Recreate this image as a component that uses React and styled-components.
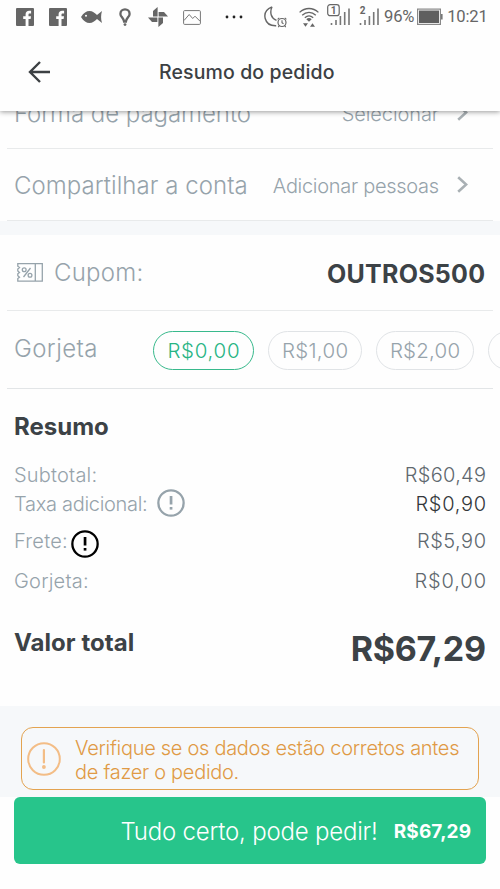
import React, { useState } from "react";
import styled, { createGlobalStyle, css } from "styled-components";

const GlobalStyle = createGlobalStyle`
  * {
    box-sizing: border-box;
  }
  body {
    margin: 0;
    background: #fefefe;
    font-family: "Inter", "Open Sans", sans-serif;
    overflow: hidden;
  }
`;

const Screen = styled.div`
  display: flex;
  flex-direction: column;
  width: 500px;
  height: 889px;
  overflow: hidden;
  background: #fefefe;
`;

const Text = styled.span`
  padding-top: ${({ $drop }) => $drop || 0}px;
  font-size: ${({ $size }) => $size || 20}px;
  font-weight: ${({ $weight }) => $weight || 300};
  letter-spacing: ${({ $spacing }) => $spacing || 0}px;
  margin-right: ${({ $spacing }) => -($spacing || 0)}px;
  color: ${({ $color }) => $color || "#96a3ab"};
  line-height: 1.2;
  white-space: nowrap;
`;

const StatusBar = styled.div`
  display: flex;
  align-items: center;
  height: 34px;
  padding-left: 16px;
  color: #666;
  svg {
    flex: none;
    display: block;
  }
`;

const StatusItem = styled.div`
  margin-left: ${({ $gap }) => $gap || 0}px;
  font-family: "Roboto", sans-serif;
  font-size: 16.6px;
  letter-spacing: -0.2px;
  line-height: 20px;
`;

const Header = styled.header`
  flex: none;
  position: relative;
  z-index: 1;
  height: 111px;
  background: #fefefe;
  box-shadow: 0 1px 5px rgba(0, 0, 0, 0.4);
`;

const TitleBar = styled.div`
  display: grid;
  grid-template-columns: 131px 1fr;
  align-items: center;
  height: 76px;
  padding-left: 28px;
`;

const Content = styled.main`
  flex: none;
  height: 595px;
  overflow: hidden;
`;

const Row = styled.div`
  display: flex;
  align-items: center;
  justify-content: space-between;
  height: ${({ $height }) => $height || 72}px;
  margin: 0 7px;
  padding: 0 8px 0 7px;
  border-bottom: 1px solid #e8eaeb;
`;

const LinkRow = styled(Row)`
  margin-top: ${({ $scrolled }) => ($scrolled ? -34 : 0)}px;
  padding-right: 25px;
`;

const LinkValue = styled.div`
  display: flex;
  align-items: center;
  gap: 18px;
`;

const Divider = styled.div`
  height: 14px;
  background: #f6f8fa;
`;

const Coupon = styled.div`
  display: flex;
  align-items: center;
  gap: 11px;
  padding-left: 3px;
`;

const TipRow = styled(Row)`
  justify-content: flex-start;
  margin-right: 0;
  padding-right: 0;
  border-bottom: 0;
  height: 77px;
  overflow: hidden;
`;

const TipLine = styled.div`
  height: 1px;
  margin: 0 7px;
  background: #e2e5e7;
`;

const TipLabel = styled.div`
  flex: 0 0 139px;
`;

const TipList = styled.div`
  display: flex;
  gap: 14px;
  padding-top: 1px;
`;

const TipPill = styled.button`
  flex: none;
  display: flex;
  align-items: center;
  justify-content: center;
  width: ${({ $width }) => $width}px;
  height: 39px;
  padding: 2px 0 0;
  border: 1.4px solid #e0e3e6;
  border-radius: 20px;
  background: transparent;
  font-family: inherit;
  ${({ $active }) =>
    $active &&
    css`
      border-color: #38b98c;
    `}
`;

const Summary = styled.section`
  padding: 22px 14px 0;
`;

const SummaryTitle = styled.h2`
  display: flex;
  margin: 0 0 20px;
  height: 32px;
  align-items: center;
`;

const SummaryLine = styled.div`
  display: flex;
  align-items: center;
  justify-content: space-between;
  height: ${({ $height }) => $height}px;
`;

const SummaryLabel = styled.div`
  display: flex;
  align-items: center;
  gap: ${({ $gap }) => $gap || 0}px;
  svg {
    display: block;
    margin-top: ${({ $drop }) => $drop || 0}px;
  }
`;

const TotalLine = styled(SummaryLine)`
  height: 50px;
  margin-top: 28px;
  align-items: flex-start;
`;

const WarningArea = styled.div`
  flex: none;
  height: 91px;
  padding: 21px 21px 0 21px;
  background: #f6f8fa;
`;

const Warning = styled.div`
  display: flex;
  align-items: center;
  gap: 14px;
  height: 63px;
  padding: 3px 0 0 5px;
  border: 1.5px solid #e3a350;
  border-radius: 12px;
  svg {
    flex: none;
    margin-top: -3px;
  }
`;

const WarningText = styled.div`
  display: flex;
  flex-direction: column;
`;

const OrderButton = styled.button`
  flex: none;
  display: flex;
  align-items: center;
  justify-content: flex-end;
  gap: 16px;
  height: 67px;
  margin: 0 14px;
  padding: 3px 15px 0 0;
  border: 0;
  border-radius: 6px;
  background: #27c58b;
  font-family: inherit;
`;

const FacebookIcon = () => (
  <svg width="18" height="18" viewBox="0 0 18 18">
    <rect width="18" height="18" rx="1" fill="#666" />
    <path
      d="M9.600 18v-7H7.200V8.200h2.400V6.300c0-2.400 1.400-3.600 3.600-3.600h1.900v2.700h-1.400c-.9 0-1.200.5-1.200 1.300v1.500H15l-.4 2.800h-2.100v7z"
      fill="#fefefe"
    />
  </svg>
);

const FishIcon = () => (
  <svg width="22" height="14" viewBox="0 0 22 14">
    <path
      d="M0 7C2.500 2.800 5.500 1 8.500 1c3 0 5.300 1.900 7.500 4l5-4c-1.200 4-1.200 8 0 12l-5-4c-2.200 2.200-4.500 4-7.500 4C5.500 13 2.500 11.200 0 7z"
      fill="#666"
    />
    <circle cx="5" cy="5.800" r="1" fill="#fefefe" />
  </svg>
);

const PinIcon = () => (
  <svg width="12" height="18" viewBox="0 0 12 18">
    <path
      d="M6 1.300a4.600 4.600 0 0 0-4.600 4.600c0 2.700 3.200 4 3.700 7.600h1.800c.5-3.600 3.700-4.900 3.700-7.600A4.600 4.600 0 0 0 6 1.300z"
      fill="none"
      stroke="#666"
      strokeWidth="2.300"
    />
    <circle cx="6" cy="16.600" r="1.400" fill="#666" />
  </svg>
);

const PinwheelIcon = () => (
  <svg width="20" height="20" viewBox="0 0 20 20" fill="#666">
    <path d="M9.600 9.400V0L5 4v5.400z" />
    <path d="M10.600 9.600H20l-4-4.600h-5.400z" />
    <path d="M10.400 10.600V20l4.600-4v-5.400z" />
    <path d="M9.400 10.400H0l4 4.600h5.400z" />
  </svg>
);

const PictureIcon = () => (
  <svg width="18" height="15" viewBox="0 0 18 15" fill="none" stroke="#777">
    <rect x=".6" y=".6" width="16.800" height="13.800" rx="1" />
    <path d="M1 10.500l5.200-6 3.500 4 2.300-2.300 5 5" />
  </svg>
);

const DotsIcon = () => (
  <svg width="18" height="4" viewBox="0 0 18 4" fill="#222">
    <circle cx="2" cy="2" r="1.400" />
    <circle cx="9" cy="2" r="1.400" />
    <circle cx="16" cy="2" r="1.400" />
  </svg>
);

const MoonIcon = () => (
  <svg width="24" height="22" viewBox="0 0 24 22" fill="none" stroke="#666" strokeWidth="1.400">
    <path d="M8 .8C2.500 3 0 7.500 1.200 12.500c1.200 4.700 5.300 7.500 11 7.300M8 .8C5.500 6.500 7 12.300 12.500 14.300" />
    <circle cx="18" cy="16.500" r="4" strokeWidth="1.200" />
    <path
      d="M18 14.300v2.400l1.500 1M13.600 13.400l1.700-1.500M22.400 13.400l-1.700-1.500M15.300 19.600l-1 1.500M20.700 19.600l1 1.500"
      strokeWidth="1.100"
    />
  </svg>
);

const WifiIcon = () => (
  <svg width="20" height="20" viewBox="0 0 20 20" fill="none" stroke="#666" strokeWidth="1.300">
    <path d="M.6 5.400c5.500-5.200 13.300-5.200 18.800 0M3.200 8.200c4-3.800 9.600-3.800 13.600 0M5.800 10.800c2.500-2.300 5.900-2.300 8.400 0" />
    <path d="M7.300 12.200c1.600-1.500 3.800-1.500 5.400 0L10 14.800z" fill="#666" stroke="none" />
    <path d="M4 16.200h5l-2.500 3.600zM11 19.800h5l-2.500-3.600z" fill="#666" stroke="none" />
  </svg>
);

const SignalIcon = ({ sim, boxed }) => (
  <svg width="23" height="26" viewBox="0 0 23 26">
    {boxed && (
      <rect x=".7" y=".7" width="11.500" height="11" rx="2.500" fill="none" stroke="#666" strokeWidth="1.200" />
    )}
    <text x="6.400" y="9.800" textAnchor="middle" fontFamily="Roboto" fontWeight="700" fontSize="10" fill="#666">
      {sim}
    </text>
    <path
      d="M4.500 19v2M9 16v5M13.400 12v9M17.700 8v13M22 4.500v16.500"
      stroke="#777"
      strokeWidth="1.600"
    />
  </svg>
);

const BatteryIcon = () => (
  <svg width="26" height="18" viewBox="0 0 26 18">
    <rect x=".6" y="1.100" width="22.800" height="15.300" fill="none" stroke="#888" strokeWidth="1.200" />
    <rect x="2" y="2.500" width="20" height="12.500" fill="#5f5f5f" />
    <rect x="24" y="6" width="1.600" height="5.500" fill="#777" />
  </svg>
);

const BackIcon = () => (
  <svg width="22" height="22" viewBox="0 0 22 22" fill="none" stroke="#3c4043" strokeWidth="2.400">
    <path d="M22 11H2M12 1L2 11l10 10" />
  </svg>
);

const ChevronIcon = () => (
  <svg width="11" height="17" viewBox="0 0 11 17" fill="none" stroke="#a9b0b4" strokeWidth="2.600">
    <path d="M1.200 1.200l8 7.300-8 7.300" />
  </svg>
);

const TicketIcon = () => (
  <svg width="26" height="19" viewBox="0 0 26 19" fill="none" stroke="#96a3ab" strokeWidth="1.300">
    <path d="M.8.700h24.500v17.500H.8v-2.600l1.700-1.400-1.700-1.500v-1.900l1.700-1.400L.8 8V6l1.700-1.400L.8 3.300zM18.300.700v17.500" />
    <circle cx="7.200" cy="6.800" r="1.900" />
    <circle cx="13" cy="12.200" r="1.900" />
    <path d="M13.500 5L6.500 14" />
  </svg>
);

const AlertIcon = ({ size = 28, color = "#96a3ab", stroke = 2.3, thin }) => (
  <svg width={size} height={size} viewBox={`0 0 ${size} ${size}`}>
    <circle
      cx={size / 2}
      cy={size / 2}
      r={size / 2 - stroke / 2 - 0.2}
      fill="none"
      stroke={color}
      strokeWidth={stroke}
    />
    {thin ? (
      <g fill={color}>
        <rect x="15.800" y="7" width="2.200" height="14.500" rx="1" />
        <circle cx="16.900" cy="25" r="1.900" />
      </g>
    ) : (
      <g fill={color}>
        <rect x="12.700" y="7" width="2.700" height="8.500" />
        <rect x="12.700" y="18" width="2.700" height="2.600" />
      </g>
    )}
  </svg>
);

const tips = [
  { label: "R$0,00", width: 101, spacing: 0.7 },
  { label: "R$1,00", width: 94, spacing: 0.3 },
  { label: "R$2,00", width: 98, spacing: 0.2 },
  { label: "R$3,00", width: 98, spacing: 0.2 },
];

const App = () => {
  const [tip, setTip] = useState("R$0,00");

  return (
    <Screen>
      <GlobalStyle />
      <Header>
        <StatusBar>
          <StatusItem><FacebookIcon /></StatusItem>
          <StatusItem $gap={15}><FacebookIcon /></StatusItem>
          <StatusItem $gap={14}><FishIcon /></StatusItem>
          <StatusItem $gap={16}><PinIcon /></StatusItem>
          <StatusItem $gap={17}><PinwheelIcon /></StatusItem>
          <StatusItem $gap={15}><PictureIcon /></StatusItem>
          <StatusItem $gap={24}><DotsIcon /></StatusItem>
          <StatusItem $gap={21}><MoonIcon /></StatusItem>
          <StatusItem $gap={11}><WifiIcon /></StatusItem>
          <StatusItem $gap={8}><SignalIcon sim="1" boxed /></StatusItem>
          <StatusItem $gap={6}><SignalIcon sim="2" /></StatusItem>
          <StatusItem $gap={5}>96%</StatusItem>
          <StatusItem $gap={3}><BatteryIcon /></StatusItem>
          <StatusItem $gap={4}>10:21</StatusItem>
        </StatusBar>
        <TitleBar>
          <BackIcon />
          <Text $size={19.5} $weight={500} $spacing={0.12} $drop={2} $color="#3c4043">
            Resumo do pedido
          </Text>
        </TitleBar>
      </Header>
      <Content>
        <LinkRow $scrolled>
          <Text $size={24} $spacing={-0.05} $drop={3}>Forma de pagamento</Text>
          <LinkValue>
            <Text $spacing={-0.1} $drop={2}>Selecionar</Text>
            <ChevronIcon />
          </LinkValue>
        </LinkRow>
        <LinkRow>
          <Text $size={24} $spacing={0.05} $drop={3}>Compartilhar a conta</Text>
          <LinkValue>
            <Text $spacing={-0.3} $drop={2}>Adicionar pessoas</Text>
            <ChevronIcon />
          </LinkValue>
        </LinkRow>
        <Divider />
        <Row $height={76}>
          <Coupon>
            <TicketIcon />
            <Text $size={24} $spacing={0.25} $drop={2}>Cupom:</Text>
          </Coupon>
          <Text $size={25} $weight={700} $spacing={0.25} $drop={2} $color="#3c4246">OUTROS500</Text>
        </Row>
        <TipRow>
          <TipLabel>
            <Text $size={24} $spacing={0.4}>Gorjeta</Text>
          </TipLabel>
          <TipList>
            {tips.map((item) => (
              <TipPill
                key={item.label}
                $width={item.width}
                $active={tip === item.label}
                onClick={() => setTip(item.label)}
              >
                <Text
                  $size={20.5}
                  $spacing={item.spacing}
                  $color={tip === item.label ? "#27b483" : "#96a3ab"}
                >
                  {item.label}
                </Text>
              </TipPill>
            ))}
          </TipList>
        </TipRow>
        <TipLine />
        <Summary>
          <SummaryTitle>
            <Text $size={24} $weight={700} $color="#3c4246">Resumo</Text>
          </SummaryTitle>
          <SummaryLine $height={24}>
            <Text $spacing={0.2}>Subtotal:</Text>
            <Text $spacing={0.3} $color="#5f686e">R$60,49</Text>
          </SummaryLine>
          <SummaryLine $height={34}>
            <SummaryLabel $gap={9} $drop={-2}>
              <Text $spacing={-0.3}>Taxa adicional:</Text>
              <AlertIcon />
            </SummaryLabel>
            <Text $spacing={0.7} $color="#33373a">R$0,90</Text>
          </SummaryLine>
          <SummaryLine $height={39}>
            <SummaryLabel $gap={3} $drop={6}>
              <Text $spacing={0.2}>Frete:</Text>
              <AlertIcon color="#000" />
            </SummaryLabel>
            <Text $spacing={0.5} $color="#5f686e">R$5,90</Text>
          </SummaryLine>
          <SummaryLine $height={41}>
            <Text $spacing={0.2}>Gorjeta:</Text>
            <Text $spacing={0.9} $color="#5f686e">R$0,00</Text>
          </SummaryLine>
          <TotalLine>
            <Text $size={24} $weight={700} $spacing={0.05} $color="#3c4246">Valor total</Text>
            <Text $size={34} $weight={700} $spacing={-0.3} $color="#3c4246">R$67,29</Text>
          </TotalLine>
        </Summary>
      </Content>
      <WarningArea>
        <Warning>
          <AlertIcon size={34} color="#f3bd86" stroke={2} thin />
          <WarningText>
            <Text $spacing={-0.29} $color="#e09a45">Verifique se os dados estão corretos antes</Text>
            <Text $spacing={-0.29} $color="#e09a45">de fazer o pedido.</Text>
          </WarningText>
        </Warning>
      </WarningArea>
      <OrderButton>
        <Text $size={24} $spacing={-0.2} $color="#fff">Tudo certo, pode pedir!</Text>
        <Text $size={19} $weight={700} $spacing={0.1} $color="#fff">R$67,29</Text>
      </OrderButton>
    </Screen>
  );
};

export default App;
